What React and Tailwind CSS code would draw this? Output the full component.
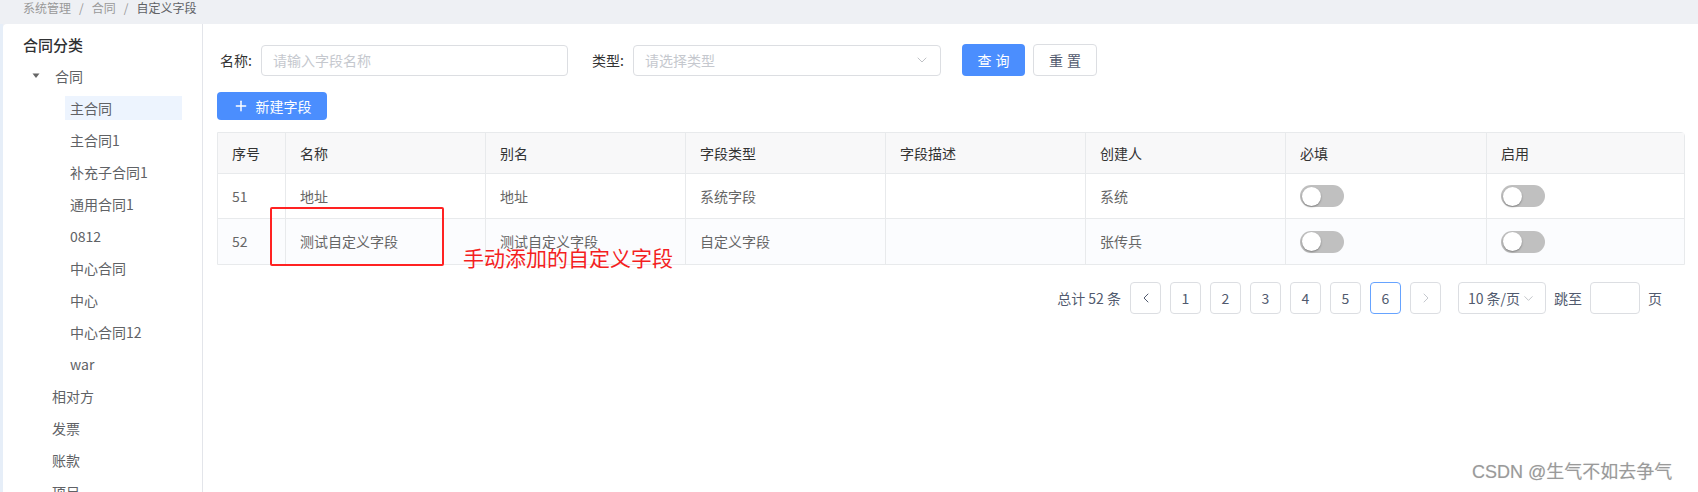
import React from 'react';
import { ChevronDown, ChevronLeft, ChevronRight, Plus } from 'lucide-react';

const FONT = { fontFamily: '"Noto Sans CJK SC", "Noto Sans", sans-serif' };

const treeChildren = ['主合同', '主合同1', '补充子合同1', '通用合同1', '0812', '中心合同', '中心', '中心合同12', 'war'];
const treeRoots = ['相对方', '发票', '账款', '项目'];

const columns = [
    { title: '序号', w: 'w-[68px]' },
    { title: '名称', w: 'w-[200px]' },
    { title: '别名', w: 'w-[200px]' },
    { title: '字段类型', w: 'w-[200px]' },
    { title: '字段描述', w: 'w-[200px]' },
    { title: '创建人', w: 'w-[200px]' },
    { title: '必填', w: 'w-[201px]' },
    { title: '启用', w: 'flex-1' }
];

const rows = [
    { no: '51', name: '地址', alias: '地址', type: '系统字段', desc: '', creator: '系统' },
    { no: '52', name: '测试自定义字段', alias: '测试自定义字段', type: '自定义字段', desc: '', creator: '张传兵' }
];

const Toggle = () => (
    <div className="w-[44px] h-[22px] rounded-full bg-[#c0c0c0] flex items-center pl-[2px]">
        <div className="w-[19px] h-[19px] rounded-full bg-white shadow-[0_1px_2px_rgba(0,0,0,0.35)]" />
    </div>
);

const Sidebar = () => (
    <div className="w-[200px] h-full bg-white border-r border-[#e3e5ea] rounded-tl-[4px] pt-[11px] overflow-hidden">
        <div className="h-[20px] leading-[20px] pl-[20px] text-[15px] font-medium text-[#303133] mb-[5px]">合同分类</div>
        <div className="h-[32px] flex items-center pl-[29px] text-[14px] text-[#606266]">
            <svg width="8" height="6" viewBox="0 0 8 6" className="mr-[15px]">
                <path d="M0.5 0.5 L7.5 0.5 L4 5 Z" fill="#666" />
            </svg>
            <span>合同</span>
        </div>
        {treeChildren.map((t, i) => (
            <div key={t} className="h-[32px] flex items-center pl-[62px]">
                <div className={`h-[24px] leading-[24px] text-[14px] text-[#606266] px-[5px] ${i === 0 ? 'bg-[#edf4fe] w-[117px]' : ''}`}>{t}</div>
            </div>
        ))}
        {treeRoots.map((t) => (
            <div key={t} className="h-[32px] flex items-center pl-[49px] text-[14px] text-[#606266]">{t}</div>
        ))}
    </div>
);

const PageBtn = ({ children, active, disabled }) => (
    <div className={`w-[31px] h-[32px] rounded-[4px] border flex items-center justify-center text-[14px] bg-white ${active ? 'border-[#66a3ff] text-[#5c9dff]' : 'border-[#dcdee2]'} ${disabled ? 'text-[#c5c8ce]' : 'text-[#515a6e]'}`}>
        {children}
    </div>
);

export default function App() {
    return (
        <div className="w-[1698px] h-[492px] overflow-hidden bg-[#eef0f4] relative" style={FONT}>
            {/* Breadcrumb */}
            <div className="h-[24px] flex items-start pl-[23px] text-[12px] leading-[16px] text-[#999]">
                <span>系统管理</span>
                <span className="mx-[8px]">/</span>
                <span>合同</span>
                <span className="mx-[8px]">/</span>
                <span className="text-[#606266]">自定义字段</span>
            </div>

            <div className="flex h-[468px]">
                <div className="w-[3px] h-full bg-[#e6eef8]" />
                <Sidebar />

                {/* Main */}
                <div className="flex-1 h-full bg-white pl-[14px] pr-[12px] pt-[20px] relative">
                    {/* Search */}
                    <div className="flex items-center h-[32px]">
                        <span className="ml-[3px] w-[41px] text-[14px] text-[#333]">名称:</span>
                        <div className="w-[307px] h-[31px] border border-[#dcdee2] rounded-[4px] flex items-center px-[11px] text-[14px] text-[#c5c8ce]">请输入字段名称</div>
                        <span className="ml-[24px] w-[41px] text-[14px] text-[#333]">类型:</span>
                        <div className="w-[308px] h-[31px] border border-[#dcdee2] rounded-[4px] flex items-center justify-between pl-[11px] pr-[10px] text-[14px] text-[#c5c8ce]">
                            <span>请选择类型</span>
                            <ChevronDown size={16} strokeWidth={1.2} className="text-[#b0b3b8]" />
                        </div>
                        <button className="ml-[21px] w-[63px] h-[32px] rounded-[4px] bg-[#4b8efe] text-white text-[14px] tracking-[4px] pl-[4px]">查询</button>
                        <button className="ml-[8px] w-[64px] h-[32px] rounded-[4px] border border-[#dcdee2] bg-white text-[#515a6e] text-[14px] tracking-[4px] pl-[4px]">重置</button>
                    </div>

                    {/* New */}
                    <button className="mt-[16px] w-[110px] h-[28px] rounded-[4px] bg-[#4b8efe] text-white text-[14px] flex items-center justify-center gap-[7px]">
                        <Plus size={16} strokeWidth={2.2} />
                        <span>新建字段</span>
                    </button>

                    {/* Table */}
                    <div className="mt-[12px] w-[1468px] border border-[#e8eaec] rounded-tr-[4px] text-[14px]">
                        <div className="flex h-[41px] bg-[#f8f8f9] border-b border-[#e8eaec]">
                            {columns.map((c, i) => (
                                <div key={c.title} className={`${c.w} flex items-center px-[14px] text-[#333] ${i < columns.length - 1 ? 'border-r border-[#e8eaec]' : ''}`}>{c.title}</div>
                            ))}
                        </div>
                        {rows.map((r, ri) => {
                            const cells = [r.no, r.name, r.alias, r.type, r.desc, r.creator];
                            return (
                                <div key={r.no} className={`flex h-[45px] ${ri === 0 ? 'border-b border-[#e8eaec] bg-white' : 'bg-[#fbfcfe]'}`}>
                                    {cells.map((v, i) => (
                                        <div key={i} className={`${columns[i].w} flex items-center px-[14px] text-[#666] border-r border-[#e8eaec]`}>{v}</div>
                                    ))}
                                    <div className="w-[201px] flex items-center px-[14px] border-r border-[#e8eaec]"><Toggle /></div>
                                    <div className="flex-1 flex items-center px-[14px]"><Toggle /></div>
                                </div>
                            );
                        })}
                    </div>

                    {/* Pagination */}
                    <div className="w-[1468px] mt-[17px] flex items-center justify-end pr-[23px] text-[14px] text-[#515a6e]">
                        <span className="mr-[9px]">总计 52 条</span>
                        <div className="flex gap-[9px]">
                            <PageBtn><ChevronLeft size={16} strokeWidth={1.5} /></PageBtn>
                            {['1', '2', '3', '4', '5'].map((p) => <PageBtn key={p}>{p}</PageBtn>)}
                            <PageBtn active>6</PageBtn>
                            <PageBtn disabled><ChevronRight size={16} strokeWidth={1.5} /></PageBtn>
                        </div>
                        <div className="ml-[17px] w-[88px] h-[32px] rounded-[4px] border border-[#dcdee2] flex items-center justify-center gap-[1px]">
                            <span>10 条/页</span>
                            <ChevronDown size={15} strokeWidth={1.2} className="text-[#b0b3b8]" />
                        </div>
                        <span className="ml-[8px]">跳至</span>
                        <div className="ml-[8px] w-[50px] h-[32px] rounded-[4px] border border-[#dcdee2]" />
                        <span className="ml-[8px]">页</span>
                    </div>
                </div>
            </div>

            {/* Red annotation */}
            <div className="absolute left-[270px] top-[207px] w-[174px] h-[59px] border-2 border-[#f22] rounded-[2px]" />
            <div className="absolute left-[463px] top-[244px] text-[21px] leading-[26px] text-[#f41f1f]">手动添加的自定义字段</div>

            {/* Watermark */}
            <div className="absolute left-[1472px] top-[460px] text-[18px] leading-[24px] text-[#9a9a9a] [text-shadow:0_0_1px_rgba(0,0,0,0.15)]" style={{ fontFamily: '"Liberation Sans", "Noto Sans CJK SC", sans-serif' }}>CSDN @生气不如去争气</div>
        </div>
    );
}
